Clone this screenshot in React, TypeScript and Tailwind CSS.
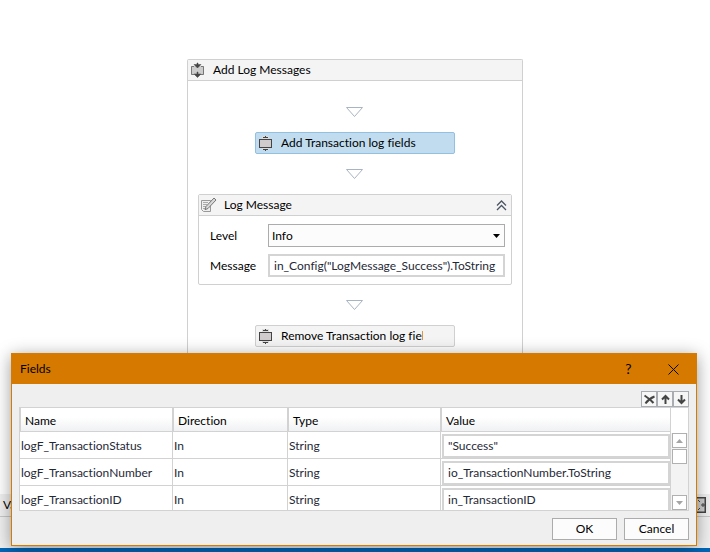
import React from 'react';

const FIELDS = [
  { name: 'logF_TransactionStatus', direction: 'In', type: 'String', value: '"Success"' },
  { name: 'logF_TransactionNumber', direction: 'In', type: 'String', value: 'io_TransactionNumber.ToString' },
  { name: 'logF_TransactionID', direction: 'In', type: 'String', value: 'in_TransactionID' },
];

const SequenceIcon = () => (
  <svg width="16" height="16" viewBox="0 0 16 16" shapeRendering="crispEdges" className="shrink-0" aria-hidden="true">
    <path d="M4 1h7v14H4z" fill="#dcdcdc" />
    <path d="M1.500 4.500h12v8h-12z" fill="#d0cccd" stroke="#444" />
    <path d="M7 1h1v1H7zM5 2h5v1H5zM5 14h5v1H5zM7 15h1v1H7z" fill="#444" />
  </svg>
);

const FlowIcon = () => (
  <svg width="16" height="16" viewBox="0 0 16 16" className="shrink-0" aria-hidden="true">
    <path d="M1 4h13v9H1z" fill="#ccc" />
    <path d="M4 4.500H1.500v8h2.500M11 4.500h2.500v8h-2.500" fill="none" stroke="#777" />
    <path d="M7 1h1v1.500h3L7.500 6 4 2.500h3zM7 10h1v2h3L7.500 15.500 4 12h3z" fill="#444" stroke="#444" strokeWidth=".5" />
  </svg>
);

const NoteIcon = () => (
  <svg width="17" height="16" viewBox="0 0 17 16" className="shrink-0" aria-hidden="true">
    <path d="M1.500 3.500h9v11h-7l-2-2z" fill="#eee" stroke="#999" />
    <path d="M3 5.500h5M3 7.500h4M3 9.500h3M3 11.500h3" stroke="#aaa" />
    <path d="M14 1l2 2-8 8.500-3 1.200 1-3.200z" fill="#d8d8d8" stroke="#777" />
  </svg>
);

const Arrow = () => (
  <svg width="18" height="11" viewBox="0 0 18 11" className="mx-auto mt-[15px] mb-[14px] block" aria-hidden="true">
    <path d="M.500.5h16l-8 9z" fill="#fff" stroke="#a9b4c2" />
  </svg>
);

const Step = ({ label, selected }: { label: string; selected?: boolean }) => (
  <button
    type="button"
    className={`mx-auto flex h-[22px] w-[200px] items-center rounded-xs border pl-[2px] text-left ${
      selected ? 'border-[#92c0e0] bg-[#c1dcee]' : 'border-[#d0d0d0] bg-[#f4f4f4]'
    }`}
  >
    <SequenceIcon />
    <span className="ml-[7px] w-[142px] overflow-hidden whitespace-nowrap">{label}</span>
  </button>
);

const ToolButton = ({ label, children }: { label: string; children: React.ReactNode }) => (
  <button
    type="button"
    aria-label={label}
    className="flex h-4 w-4 items-center justify-center border border-[#a9adb2] bg-[#f6f6f6]"
  >
    <svg width="11" height="11" viewBox="0 0 11 11" className="shrink-0" fill="none" stroke="#444" strokeWidth="2" aria-hidden="true">
      {children}
    </svg>
  </button>
);

const ScrollArrow = ({ label, d }: { label: string; d: string }) => (
  <button type="button" aria-label={label} className="flex h-[15px] w-[15px] items-center justify-center border border-[#b0b0b0] bg-white">
    <svg width="7" height="4" viewBox="0 0 7 4" aria-hidden="true">
      <path d={d} fill="#a5a5a5" />
    </svg>
  </button>
);

const HEAD = 'border-x border-b border-[#d2d2d2] bg-linear-to-b from-white from-40% to-[#f0f1f3] pt-[2px] pl-1 text-left font-normal text-black';
const CELL = 'h-[27px] border-r border-b border-[#d2d2d2] p-0 pt-px pl-px';

const FieldsDialog = () => (
  <section
    role="dialog"
    aria-labelledby="fields-title"
    className="absolute right-[13px] bottom-[6px] left-[11px] border border-[#d67a00] bg-[#efefef] shadow-[0_3px_16px_rgba(0,0,0,0.4)]"
  >
    <header className="flex h-[30px] items-center bg-[#d67900] pl-2">
      <h2 id="fields-title" className="flex-1">Fields</h2>
      <button type="button" aria-label="Help" className="w-[45px] text-sm">?</button>
      <button type="button" aria-label="Close" className="flex w-[45px] justify-center">
        <svg width="11" height="11" viewBox="0 0 11 11" stroke="#000" aria-hidden="true">
          <path d="M.5.5l10 10M10.500.5l-10 10" />
        </svg>
      </button>
    </header>

    <div className="px-[7px] pt-[7px] pb-[5px]">
      <div className="flex justify-end">
        <ToolButton label="Delete field">
          <path d="M.5 1.500c3 2 6 4 9 7.500M1.500 9.500c2-3 5-5.500 9-7" />
        </ToolButton>
        <ToolButton label="Move up">
          <path d="M5.500 10V2M2 5.500L5.500 2 9 5.500" />
        </ToolButton>
        <ToolButton label="Move down">
          <path d="M5.500 1v8M2 5.500L5.500 9 9 5.500" />
        </ToolButton>
      </div>

      <div className="flex h-[104px] overflow-hidden border border-[#d2d2d2] bg-white">
        <table className="flex-1 table-fixed border-separate border-spacing-0 self-start text-[#1f2937]">
          <thead>
            <tr className="h-6">
              <th scope="col" className={`${HEAD} w-[153px]`}>Name</th>
              <th scope="col" className={`${HEAD} w-[115px]`}>Direction</th>
              <th scope="col" className={`${HEAD} w-[153px]`}>Type</th>
              <th scope="col" className={HEAD}>Value</th>
            </tr>
          </thead>
          <tbody>
            {FIELDS.map((field) => (
              <tr key={field.name}>
                <td className={CELL}>{field.name}</td>
                <td className={CELL}>{field.direction}</td>
                <td className={CELL}>{field.type}</td>
                <td className={CELL}>
                  <input
                    type="text"
                    aria-label={`${field.name} value`}
                    defaultValue={field.value}
                    className="block h-6 w-full border-2 border-[#d4d4d4] bg-white px-1 outline-none"
                  />
                </td>
              </tr>
            ))}
          </tbody>
        </table>
        <div className="flex w-[17px] flex-col items-center">
          <div className="h-[25px] shrink-0" />
          <div className="flex w-full flex-1 flex-col items-center gap-px bg-[#f3f3f3]">
            <ScrollArrow label="Scroll up" d="M0 4h7L3.500 0z" />
            <div className="h-[15px] w-[15px] border border-[#b0b0b0] bg-white" />
            <div className="flex-1" />
            <ScrollArrow label="Scroll down" d="M0 0h7L3.500 4z" />
          </div>
        </div>
      </div>

      <footer className="mt-[7px] flex justify-end gap-[7px] text-black">
        <button type="button" className="h-[22px] w-[65px] border border-[#acacac] bg-[#fcfcfc]">OK</button>
        <button type="button" className="h-[22px] w-[65px] border border-[#acacac] bg-[#fcfcfc]">Cancel</button>
      </footer>
    </div>
  </section>
);

export default function App() {
  return (
    <div className="relative flex min-h-screen flex-col bg-white font-['Lato','Open_Sans',sans-serif] text-xs text-black [font-variant-ligatures:none]">
      <main className="flex flex-1 flex-col pt-[59px]">
        <section className="mx-auto w-[336px] flex-1 rounded-t-xs border border-b-0 border-[#d0d0d0]">
          <header className="flex h-[21px] items-center border-b border-[#d0d0d0] bg-[#f4f4f4] pl-[2px]">
            <FlowIcon />
            <h1 className="ml-[7px]">Add Log Messages</h1>
          </header>

          <div className="flex flex-col px-[10px] pt-[11px]">
            <Arrow />
            <Step label="Add Transaction log fields" selected />
            <Arrow />

            <section className="rounded-xs border border-[#d0d0d0]">
              <header className="flex h-[21px] items-center border-b border-[#d0d0d0] bg-[#f4f4f4] pr-1 pl-px">
                <NoteIcon />
                <h2 className="ml-[7px] flex-1">Log Message</h2>
                <button type="button" aria-label="Collapse">
                  <svg width="11" height="11" viewBox="0 0 11 11" fill="none" stroke="#4b5563" strokeWidth="1.3" aria-hidden="true">
                    <path d="M1 5.500l4.500-4.500L10 5.500M1 10l4.500-4.500L10 10" />
                  </svg>
                </button>
              </header>
              <div className="grid grid-cols-[58px_1fr] items-center gap-y-[7px] pt-2 pr-[6px] pb-[7px] pl-[11px]">
                <label htmlFor="level">Level</label>
                <div className="relative">
                  <select id="level" className="block h-[23px] w-full appearance-none border border-[#acacac] bg-[#fcfcfc] pl-[3px] outline-none">
                    <option>Info</option>
                  </select>
                  <svg width="7" height="4" viewBox="0 0 7 4" className="pointer-events-none absolute top-[10px] right-[5px]" aria-hidden="true">
                    <path d="M0 0h7L3.500 4z" />
                  </svg>
                </div>
                <label htmlFor="message">Message</label>
                <input
                  id="message"
                  type="text"
                  defaultValue={'in_Config("LogMessage_Success").ToString'}
                  className="block h-[23px] w-full border-2 border-[#d4d4d4] bg-white px-1 text-[#1f2937] outline-none"
                />
              </div>
            </section>

            <Arrow />
            <Step label="Remove Transaction log fields" />
          </div>
        </section>
      </main>

      <footer className="bg-[#f0f0f0]">
        <div className="flex h-[23px] items-center justify-between border-b border-[#c8c8c8] pr-1 pl-[3px]">
          <span>Va</span>
          <svg width="16" height="16" viewBox="0 0 16 16" fill="none" stroke="#444" aria-hidden="true">
            <path d="M.5.5h15v15H.5z" fill="#d0d0d0" strokeWidth="2" />
            <path d="M11 8h4M13 6v4M8 3l2 2M8 13l2-2" />
          </svg>
        </div>
        <div className="h-[31px]" />
        <div className="h-1 bg-[#0067b8]" />
      </footer>
      <FieldsDialog />
    </div>
  );
}
